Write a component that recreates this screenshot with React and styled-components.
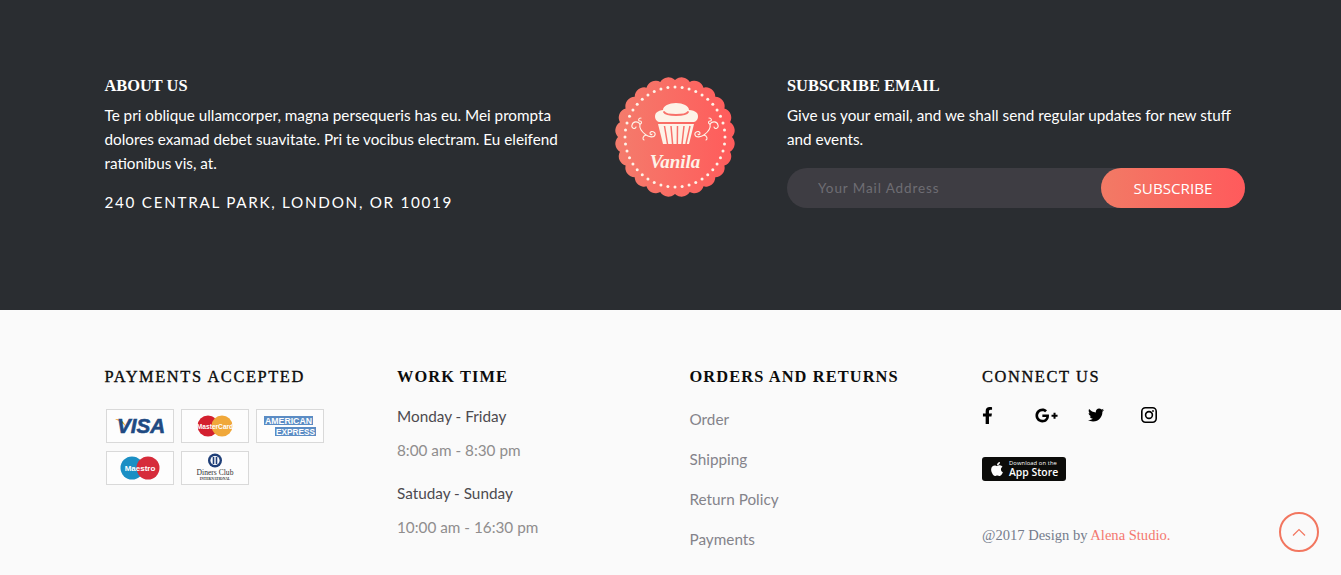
import React from "react";
import styled, { createGlobalStyle } from "styled-components";
import { FaFacebookF, FaGooglePlusG, FaTwitter, FaApple } from "react-icons/fa";

const Global = createGlobalStyle`
  html, body { margin: 0; padding: 0; background: #fafafa; }
  * { box-sizing: border-box; }
  body { font-family: "Lato", "Liberation Sans", sans-serif; overflow: hidden; }
`;

const Page = styled.div`
  position: relative;
  width: 1341px;
  height: 575px;
  overflow: hidden;
`;

const TopBand = styled.section`
  display: flex;
  height: 310px;
  padding: 76px 0 0 104.5px;
  background: #2a2d31;
  color: #fff;
`;

const About = styled.div`
  width: 510px;
`;

const LogoCol = styled.div`
  width: 172.5px;
  padding-top: 1px;
  svg { display: block; }
`;

const Subscribe = styled.div`
  width: 458px;
`;

const TopTitle = styled.h3`
  margin: 0 0 7px;
  font: 700 16.4px/20px "Liberation Serif", serif;
  color: #fff;
`;

const TopText = styled.p`
  margin: 0;
  width: ${(p) => p.$width};
  font-size: 15.25px;
  line-height: 24px;
  color: #fff;
`;

const Address = styled.p`
  margin: 15px 0 0;
  font-size: 15.25px;
  line-height: 24px;
  letter-spacing: 1.7px;
  color: #fff;
`;

const Form = styled.form`
  display: flex;
  height: 40px;
  margin-top: 17px;
  border-radius: 20px;
  background: #3e3d43;
`;

const MailInput = styled.input`
  flex: 1;
  min-width: 0;
  padding: 0 0 0 31px;
  border: 0;
  outline: 0;
  background: transparent;
  font: 13.5px "Lato", sans-serif;
  letter-spacing: 0.9px;
  color: #fff;
  &::placeholder { color: #6e6d73; opacity: 1; }
`;

const SubscribeButton = styled.button`
  width: 144px;
  border: 0;
  border-radius: 20px;
  background: linear-gradient(90deg, #f27a65, #ff5a5c);
  font: 15.2px "Open Sans", sans-serif;
  color: #fff;
`;

const BottomBand = styled.section`
  display: grid;
  grid-template-columns: repeat(4, 292.5px);
  height: 265px;
  padding: 56px 0 0 104.5px;
  background: #fafafa;
`;

const Column = styled.div`
  min-width: 0;
`;

const Title = styled.h4`
  margin: 0;
  font: ${(p) => (p.$medium ? 400 : 700)} 16.4px/21px "Liberation Serif", serif;
  letter-spacing: ${(p) => (p.$medium ? "1.6px" : "1.1px")};
  -webkit-text-stroke: ${(p) => (p.$medium ? "0.35px #0c0c0c" : "0")};
  color: #0c0c0c;
`;

const Cards = styled.div`
  display: flex;
  flex-wrap: wrap;
  gap: 8px 7px;
  width: 225px;
  margin: 22px 0 0 1.5px;
`;

const Card = styled.div`
  display: flex;
  align-items: center;
  justify-content: center;
  width: 68px;
  height: 34px;
  border: 1px solid #d9d9d9;
  background: #fdfdfd;
  svg { display: block; }
`;

const Times = styled.div`
  margin-top: 17px;
`;

const Day = styled.div`
  margin-top: ${(p) => (p.$later ? "19px" : "0")};
  font-size: 15.3px;
  line-height: 24px;
  color: #4d4a4f;
`;

const Hours = styled.div`
  margin-top: 10px;
  font-size: 15.3px;
  line-height: 24px;
  color: #8f8d8d;
`;

const Links = styled.ul`
  margin: 12px 0 0;
  padding: 0;
  list-style: none;
`;

const LinkItem = styled.li`
  height: 40px;
  font-size: 15.3px;
  line-height: 40px;
  color: #84838a;
`;

const Socials = styled.div`
  display: flex;
  align-items: center;
  margin-top: 19px;
  height: 18px;
`;

const Social = styled.span`
  display: flex;
  width: 53px;
  margin-left: ${(p) => p.$nudge || "0"};
  margin-right: ${(p) => (p.$nudge ? "3px" : "0")};
  font-size: ${(p) => p.$size || "16px"};
  color: #000;
`;

const Badge = styled.div`
  display: flex;
  align-items: center;
  gap: 4px;
  width: 84px;
  height: 24px;
  margin-top: 33px;
  padding-left: 7px;
  border-radius: 3px;
  background: #0c0c0a;
  color: #fff;
`;

const BadgeText = styled.div`
  display: flex;
  flex-direction: column;
`;

const BadgeSmall = styled.span`
  font: 5.8px/7px "Open Sans", sans-serif;
  letter-spacing: 0.1px;
`;

const BadgeBig = styled.span`
  font: 600 10.4px/11px "Open Sans", sans-serif;
`;

const Copy = styled.p`
  margin: 44px 0 0;
  font: 14.55px/20px "Liberation Serif", serif;
  color: #757c8c;
`;

const Accent = styled.span`
  color: #f4776f;
`;

const ToTop = styled.button`
  position: absolute;
  left: 1279px;
  top: 512px;
  display: flex;
  align-items: center;
  justify-content: center;
  width: 40px;
  height: 40px;
  padding: 0;
  border: 2px solid #f2765f;
  border-radius: 50%;
  background: transparent;
`;

// scalloped edge: one bump every 15deg around the centre
function scallopPath() {
  const n = 24;
  const r = 57;
  let d = "";
  for (let i = 0; i <= n; i++) {
    const a = (i / n) * Math.PI * 2;
    const x = (60 + r * Math.cos(a)).toFixed(2);
    const y = (60 + r * Math.sin(a)).toFixed(2);
    d += i === 0 ? `M${x} ${y}` : `A9.5 9.5 0 0 1 ${x} ${y}`;
  }
  return d + "Z";
}

const dots = Array.from({ length: 44 }, (_, i) => {
  const a = (i / 44) * Math.PI * 2;
  return [60 + 50 * Math.cos(a), 60 + 50 * Math.sin(a)];
});

function Flourish({ flip }) {
  return (
    <g transform={flip ? "translate(120 0) scale(-1 1)" : undefined} fill="none" stroke="#fdf3e8" strokeWidth="1.1" strokeLinecap="round">
      <path d="M25 47c-2-3-7-3-8 1-1 3 3 5 4 2" />
      <path d="M25 47c-1 4 2 8 6 11 3 2 8 3 9 0 1-3-4-5-5-2 0 2 2 2 2 1" />
      <path d="M26 41c-3 0-3 3-1 3 2 0 2 3 0 3" />
      <path d="M31 58c-3 1-4 4-2 5" />
    </g>
  );
}

function VanilaLogo() {
  return (
    <svg width="120" height="120" viewBox="0 0 120 120">
      <defs>
        <linearGradient id="badgeFill" x1="0" x2="1" y1="0" y2="0">
          <stop offset="0" stopColor="#f47c6c" />
          <stop offset="1" stopColor="#ff5b5b" />
        </linearGradient>
      </defs>
      <path d={scallopPath()} fill="url(#badgeFill)" />
      {dots.map(([x, y], i) => (
        <circle key={i} cx={x} cy={y} r="1.5" fill="#fdf3e8" />
      ))}
      <path d="M44 45c-4-1-5-6-3-9 2-2 5-3 7-3 0-4 6-7 13-7s13 3 13 7c3 0 6 1 8 3 2 3 1 8-3 9z" fill="#fdf3e8" />
      <path d="M49 35c2 4 22 4 24 0" fill="none" stroke="#f8716a" strokeWidth="1.8" strokeLinecap="round" />
      <path d="M43 47h36l-5 20H48z" fill="#fdf3e8" />
      <path d="M49.5 49l3 18M56 49l1.6 18M62.5 49l-.2 18M69 49l-2 18M75 49l-4 18" stroke="#f8716a" strokeWidth="1.5" />
      <Flourish />
      <Flourish flip />
      <text x="60" y="91" textAnchor="middle" fontFamily="Liberation Serif, serif" fontStyle="italic" fontWeight="700" fontSize="19" fill="#fdf3e8">Vanila</text>
    </svg>
  );
}

function InstagramGlyph() {
  return (
    <svg width="16" height="16" viewBox="0 0 16 16" fill="none" stroke="#000" strokeWidth="1.6">
      <rect x="0.8" y="0.8" width="14.4" height="14.4" rx="3.6" />
      <circle cx="8" cy="8" r="3.4" />
      <circle cx="12" cy="4" r="0.9" fill="#000" stroke="none" />
    </svg>
  );
}

function Visa() {
  return (
    <svg width="52" height="26" viewBox="0 0 52 26">
      <path d="M1 6c5 0 9 2 11 8C9 10 5 8 1 6z" fill="#eda62a" />
      <text x="3" y="20" textLength="48" lengthAdjust="spacingAndGlyphs" fontFamily="Liberation Sans, sans-serif" fontStyle="italic" fontWeight="700" fontSize="20" stroke="#1f4a82" strokeWidth="0.6" fill="#1f4a82">VISA</text>
    </svg>
  );
}

function MasterCard() {
  return (
    <svg width="36" height="22" viewBox="0 0 36 22">
      <circle cx="11" cy="11" r="10.5" fill="#d3202f" />
      <circle cx="25" cy="11" r="10.5" fill="#f0a83a" />
      <text x="18" y="13.5" textAnchor="middle" fontFamily="Liberation Sans, sans-serif" fontWeight="700" fontSize="6.6" fill="#fff">MasterCard</text>
    </svg>
  );
}

function Amex() {
  return (
    <svg width="54" height="26" viewBox="0 0 54 26">
      <rect x="1" y="3" width="49" height="9" fill="#5b8cc4" />
      <rect x="12" y="14" width="41" height="9" fill="#5b8cc4" />
      <text x="2" y="11.2" textLength="47" lengthAdjust="spacingAndGlyphs" fontFamily="Liberation Sans, sans-serif" fontWeight="700" fontSize="8.4" fill="#fff">AMERICAN</text>
      <text x="13" y="22.2" textLength="39" lengthAdjust="spacingAndGlyphs" fontFamily="Liberation Sans, sans-serif" fontWeight="700" fontSize="8.4" fill="#fff">EXPRESS</text>
    </svg>
  );
}

function Maestro() {
  return (
    <svg width="40" height="24" viewBox="0 0 40 24">
      <circle cx="12" cy="12" r="11.5" fill="#1b8fc4" />
      <circle cx="28" cy="12" r="11.5" fill="#d62b3a" />
      <text x="20" y="15" textAnchor="middle" fontFamily="Liberation Sans, sans-serif" fontWeight="700" fontSize="8" fill="#fff">Maestro</text>
    </svg>
  );
}

function Diners() {
  return (
    <svg width="40" height="30" viewBox="0 0 40 30">
      <circle cx="20" cy="7.5" r="7" fill="#1f3f78" />
      <circle cx="20" cy="7.5" r="4.6" fill="#fff" />
      <path d="M18.5 4v7M21.5 4v7" stroke="#1f3f78" strokeWidth="1.6" />
      <text x="20" y="22" textAnchor="middle" fontFamily="Liberation Serif, serif" fontSize="7.6" fill="#333">Diners Club</text>
      <text x="20" y="27" textAnchor="middle" fontFamily="Liberation Serif, serif" fontWeight="700" fontSize="3.6" fill="#333">INTERNATIONAL</text>
    </svg>
  );
}

export default function App() {
  return (
    <Page>
      <Global />
      <TopBand>
        <About>
          <TopTitle>ABOUT US</TopTitle>
          <TopText $width="460px">
            Te pri oblique ullamcorper, magna persequeris has eu. Mei prompta dolores examad debet suavitate. Pri te vocibus electram. Eu eleifend rationibus vis, at.
          </TopText>
          <Address>240 CENTRAL PARK, LONDON, OR 10019</Address>
        </About>
        <LogoCol>
          <VanilaLogo />
        </LogoCol>
        <Subscribe>
          <TopTitle>SUBSCRIBE EMAIL</TopTitle>
          <TopText $width="458px">
            Give us your email, and we shall send regular updates for new stuff and events.
          </TopText>
          <Form>
            <MailInput placeholder="Your Mail Address" />
            <SubscribeButton type="button">SUBSCRIBE</SubscribeButton>
          </Form>
        </Subscribe>
      </TopBand>
      <BottomBand>
        <Column>
          <Title $medium>PAYMENTS ACCEPTED</Title>
          <Cards>
            <Card><Visa /></Card>
            <Card><MasterCard /></Card>
            <Card><Amex /></Card>
            <Card><Maestro /></Card>
            <Card><Diners /></Card>
          </Cards>
        </Column>
        <Column>
          <Title>WORK TIME</Title>
          <Times>
            <Day>Monday - Friday</Day>
            <Hours>8:00 am - 8:30 pm</Hours>
            <Day $later>Satuday - Sunday</Day>
            <Hours>10:00 am - 16:30 pm</Hours>
          </Times>
        </Column>
        <Column>
          <Title>ORDERS AND RETURNS</Title>
          <Links>
            <LinkItem>Order</LinkItem>
            <LinkItem>Shipping</LinkItem>
            <LinkItem>Return Policy</LinkItem>
            <LinkItem>Payments</LinkItem>
          </Links>
        </Column>
        <Column>
          <Title $medium>CONNECT US</Title>
          <Socials>
            <Social $size="17px" $nudge="-3px"><FaFacebookF /></Social>
            <Social $size="23px"><FaGooglePlusG /></Social>
            <Social><FaTwitter /></Social>
            <Social><InstagramGlyph /></Social>
          </Socials>
          <Badge>
            <FaApple size={16} />
            <BadgeText>
              <BadgeSmall>Download on the</BadgeSmall>
              <BadgeBig>App Store</BadgeBig>
            </BadgeText>
          </Badge>
          <Copy>@2017 Design by <Accent>Alena Studio.</Accent></Copy>
        </Column>
      </BottomBand>
      <ToTop aria-label="Back to top">
        <svg width="14" height="8" viewBox="0 0 14 8" fill="none" stroke="#f2765f" strokeWidth="1.2">
          <path d="M1 7.5L7 1.5l6 6" />
        </svg>
      </ToTop>
    </Page>
  );
}
